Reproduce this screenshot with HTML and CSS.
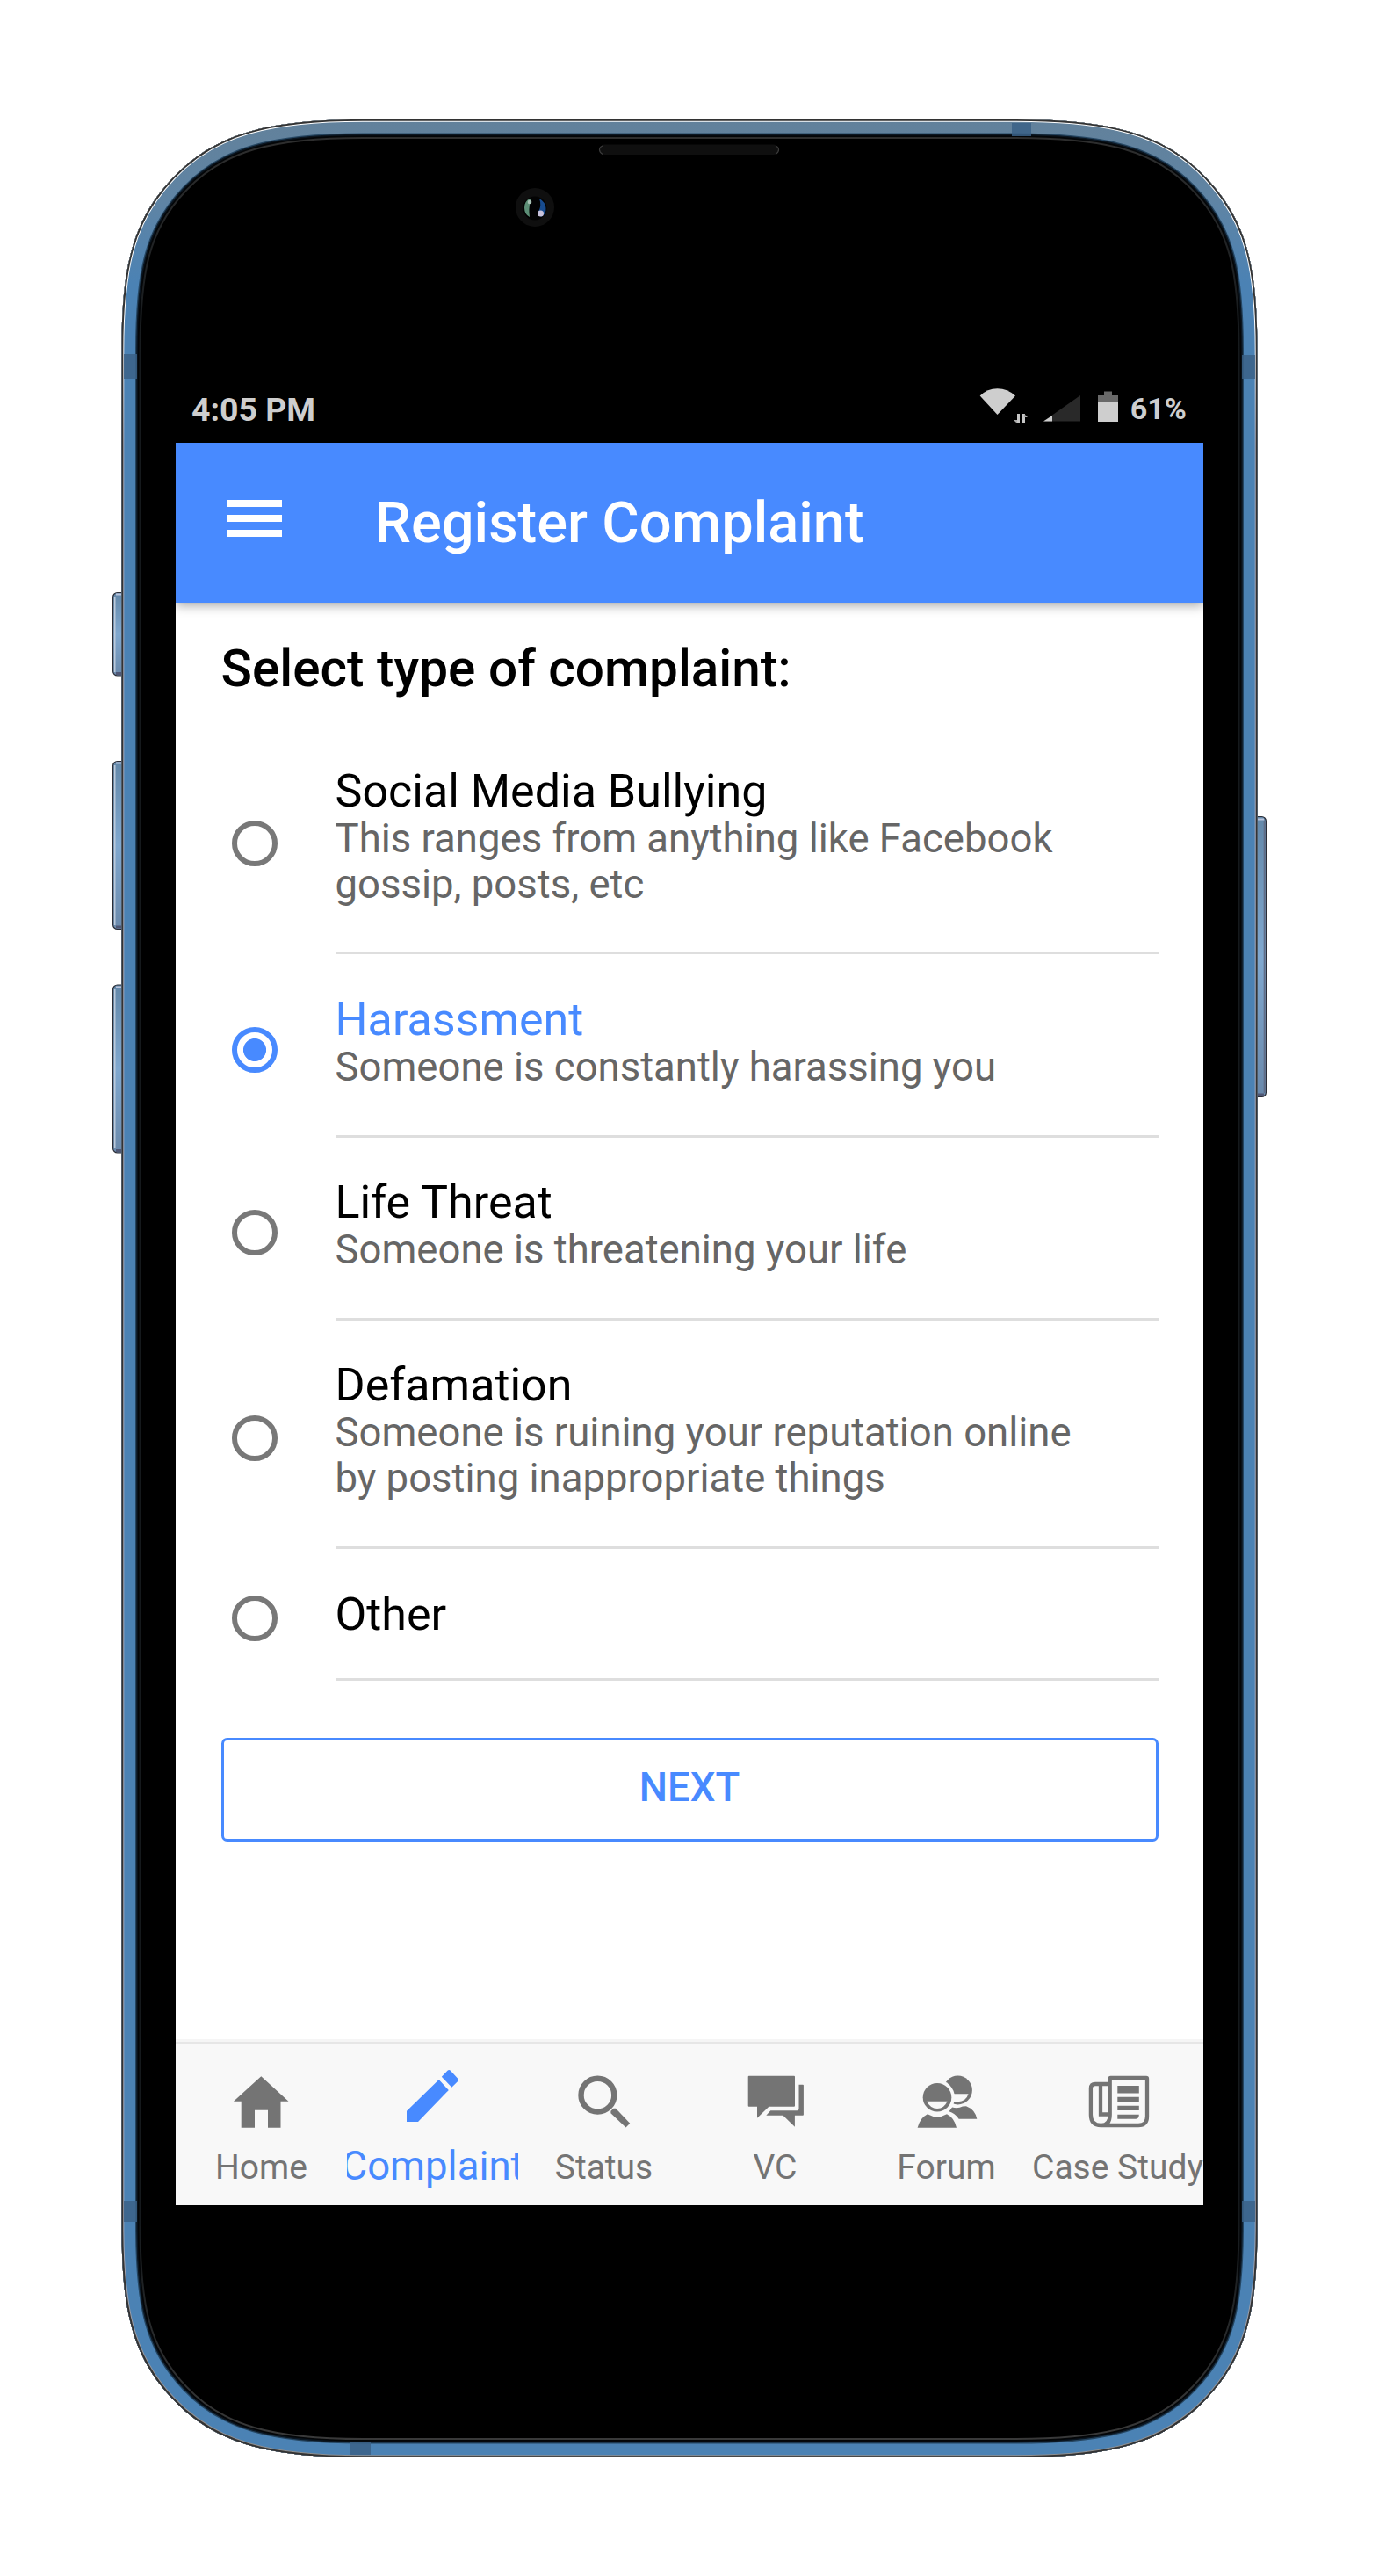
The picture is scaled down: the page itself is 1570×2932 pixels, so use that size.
FILE: index.html
```html
<!DOCTYPE html>
<html lang="en">
<head>
<meta charset="utf-8">
<title>Register Complaint</title>
<link rel="stylesheet" href="styles.css">
</head>
<body>
<div class="device">
  <svg class="device-art" viewBox="0 0 1570 2932" aria-hidden="true">
    <defs>
      <path id="shell" d="M138.5 400C138.5 310 148 253 197 202C245 151 308 136 413 136H1157C1262 136 1325 151 1373 202C1422 253 1431.5 310 1431.5 400V2533C1431.5 2623 1422 2680 1373 2731C1325 2782 1262 2797 1157 2797H413C308 2797 245 2782 197 2731C148 2680 138.5 2623 138.5 2533Z"/>
      <clipPath id="shell-clip"><use href="#shell"/></clipPath>
      <linearGradient id="metal" gradientUnits="userSpaceOnUse" x1="0" y1="136" x2="0" y2="2797">
        <stop offset="0" stop-color="#62819b"/><stop offset=".035" stop-color="#5f84a4"/><stop offset=".07" stop-color="#4b82b4"/><stop offset="1" stop-color="#4b82b4"/>
      </linearGradient>
      <linearGradient id="rim" gradientUnits="userSpaceOnUse" x1="0" y1="136" x2="0" y2="2797">
        <stop offset="0" stop-color="#303030"/><stop offset=".1" stop-color="#15191c"/><stop offset=".9" stop-color="#15191c"/><stop offset="1" stop-color="#3c3c3c"/>
      </linearGradient>
      <linearGradient id="highlight" gradientUnits="userSpaceOnUse" x1="0" y1="136" x2="0" y2="2797">
        <stop offset="0" stop-color="#fff"/><stop offset=".09" stop-color="#fff"/><stop offset=".14" stop-color="#a9adc0"/><stop offset=".88" stop-color="#a9adc0"/><stop offset="1" stop-color="#8d8d8d"/>
      </linearGradient>
      <linearGradient id="key" x1="0" y1="0" x2="0" y2="1">
        <stop offset="0" stop-color="#6388a9"/><stop offset=".5" stop-color="#80a8cf"/><stop offset="1" stop-color="#6a89ab"/>
      </linearGradient>
    </defs>
    <g fill="url(#key)" stroke="#2b2d36" stroke-width="1.2">
      <rect x="128.6" y="674.5" width="20" height="94.5" rx="5"/>
      <rect x="128.6" y="866.5" width="20" height="191" rx="5"/>
      <rect x="128.6" y="1121" width="20" height="191" rx="5"/>
      <rect x="1421" y="929.5" width="20.4" height="319" rx="5"/>
    </g>
    <path d="M130.7 679V765M130.7 871V1053M130.7 1126V1307" stroke="#bccadb" stroke-width="1.6"/>
    <path d="M1439.5 934V1244" stroke="#626d87" stroke-width="1.6"/>
    <path d="M132 676.5h7M132 868.5h7M132 1123.5h7M1432 932.5h7" stroke="#b9c4dc" stroke-width="2"/>
    <path d="M132 766.5h7M132 1055h7M132 1309.5h7M1432 1246h7" stroke="#4f5775" stroke-width="3"/>
    <g clip-path="url(#shell-clip)" fill="none">
      <use href="#shell" fill="#000"/>
      <use href="#shell" stroke="url(#rim)" stroke-width="44"/>
      <use href="#shell" stroke="#040608" stroke-width="40"/>
      <use href="#shell" stroke="#0b1621" stroke-width="36.5"/>
      <use href="#shell" stroke="#254662" stroke-width="33.5"/>
      <use href="#shell" stroke="url(#metal)" stroke-width="31"/>
      <use href="#shell" stroke="url(#highlight)" stroke-width="5.6"/>
      <use href="#shell" stroke="#333" stroke-width="3.6"/>
    </g>
    <g fill="#3b6287" fill-opacity=".85">
      <rect x="141" y="403" width="15" height="28"/><rect x="1414" y="404" width="15" height="27"/>
      <rect x="141" y="2505" width="15" height="24"/><rect x="1414" y="2505" width="15" height="24"/>
      <rect x="1152" y="140" width="22" height="15"/><rect x="398" y="2779" width="24" height="15"/>
    </g>
    <rect x="682.5" y="164.5" width="204" height="11.5" rx="5.7" fill="#0f0f0f"/>
    <path d="M686 166q-3.5 1.5-3.5 4.5t3.5 5M883 166q3.5 1.5 3.5 4.5t-3.5 5" fill="none" stroke="#3c3c3c" stroke-width="1.2"/>
    <circle cx="609" cy="236" r="22" fill="#0f0f0f"/>
    <circle cx="609" cy="237" r="13.5" fill="#030303"/>
    <path d="M603 226q-6 3-6 10.500t6 10.500q-1.500-9 1-20z" fill="#5c8e76"/>
    <path d="M614 226q7 4 7.500 11t-5.500 10l-3-6q4-7 1-15z" fill="#174b8e"/>
    <circle cx="603" cy="230" r="2.3" fill="#a9c2b5"/><circle cx="615.5" cy="243" r="3.5" fill="#c9c3dc"/>
  </svg>

  <main class="screen">
    <div class="status-bar">
      <span class="clock">4:05 PM</span>
      <svg class="status-icons" viewBox="0 0 160 46" aria-hidden="true">
        <path d="M.7 12.5Q9 4.300 20.500 4.300T41 12.500L20.500 34Z" fill="#cecece"/>
        <path d="M44.500 33v11M50.500 33v11" stroke="#c6c6c6" stroke-width="3"/><path d="M39 40h4v4zM55 37h-4v-4z" fill="#aaa"/>
        <path d="M73 41.500L115 12V41.500Z" fill="#292929"/><path d="M73 41.500L83 35V41.500Z" fill="#cecece"/>
        <path d="M135 20V12h7V7.500h9V12h7v8z" fill="#696969"/><path d="M135 20h23v22h-23z" fill="#cecece"/>
      </svg>
      <span class="battery">61%</span>
    </div>

    <header class="app-bar">
      <button class="menu" aria-label="Menu"><i></i><i></i><i></i></button>
      <h1>Register Complaint</h1>
    </header>

    <section class="content">
      <h2>Select type of complaint:</h2>
      <div class="option"><span class="radio"></span><div class="option-text"><h3>Social Media Bullying</h3><p>This ranges from anything like Facebook<br>gossip, posts, etc</p></div></div>
      <div class="option selected"><span class="radio"></span><div class="option-text"><h3>Harassment</h3><p>Someone is constantly harassing you</p></div></div>
      <div class="option"><span class="radio"></span><div class="option-text"><h3>Life Threat</h3><p>Someone is threatening your life</p></div></div>
      <div class="option"><span class="radio"></span><div class="option-text"><h3>Defamation</h3><p>Someone is ruining your reputation online<br>by posting inappropriate things</p></div></div>
      <div class="option single"><span class="radio"></span><div class="option-text"><h3>Other</h3></div></div>
      <button class="next">NEXT</button>
    </section>

    <nav class="tabs">
      <a class="tab"><svg viewBox="0 0 78 78"><path d="M38.300 10.200L69.500 38.700H60.500V68.700H46V48.700H31V68.700H15.700V38.700H6.900Z"/></svg><span>Home</span></a>
      <a class="tab active"><svg viewBox="0 0 78 78"><path d="M9 49.700V62H22L56.800 26L45.700 14ZM48.800 10.700L55.500 3.800Q57.200 2.300 58.900 3.800L67.200 12.800Q68.600 14.500 67.200 16L60.300 22.700Z"/></svg><span>Complaint</span></a>
      <a class="tab"><svg viewBox="0 0 78 78"><circle cx="31.400" cy="31.700" r="18.900" fill="none" stroke="currentColor" stroke-width="6.400"/><path d="M46.400 49.800L49.500 46.800H52L68.200 63.700L63.500 68.500L46.400 52.300Z"/></svg><span>Status</span></a>
      <a class="tab"><svg viewBox="0 0 78 78"><path d="M8.700 9.700H60q1 0 1 1V43.700q0 1-1 1H31.400L18 57.700V44.700H8.700q-1 0-1-1V10.700q0-1 1-1ZM65.500 19.700H70q.9 0 .9.9V53.800q0 .9-.9.9H60.900V67.700L47.500 54.700H28.300L33.300 49.300H63.500q2 0 2-2Z"/></svg><span>VC</span></a>
      <a class="tab"><svg viewBox="0 0 78 78"><circle cx="51.500" cy="26" r="16.400"/><path class="paper" d="M47 30.300H63.500Q61 38.800 51.500 39.200H46Z"/><path d="M45 45.500Q51.500 47.500 57 44.600L61 44.300Q71 48 73.300 58.700H52.600Q48 52 41.500 50.300Z"/><circle class="paper" cx="28" cy="34.300" r="20"/><circle cx="28" cy="34.300" r="16.300"/><path class="paper" d="M16.300 38.800H39.500Q36 47 28 47T16.300 38.800Z"/><path d="M17 53.300Q28 59.500 39 53.300Q47.500 57.500 50 68.700H5.600Q8.500 57.500 17 53.300Z"/></svg><span>Forum</span></a>
      <a class="tab"><svg viewBox="0 0 78 78"><g fill="none" stroke="currentColor" stroke-width="4.300"><path d="M29.700 19H13Q7.900 19 7.900 24V54Q7.900 66 19.500 66H62Q72 66 72 56V13Q72 11.900 71 11.900H30.500Q29.700 11.900 29.700 13V54Q29.700 66 19.500 66"/><path d="M19 19V53.500H29.700"/></g><path d="M38.300 21H62.800V29.400H38.300ZM38.300 33.700H62.800V39.300H38.300ZM38.300 43.700H62.800V49H38.300ZM38.300 53.700H62.800Q62.800 58.700 58.800 58.700H38.300Z"/></svg><span>Case Study</span></a>
    </nav>
  </main>
</div>
</body>
</html>
```
FILE: styles.css
```css
* { box-sizing: border-box; }
body {
  margin: 0;
  background: #fff;
  font-family: Roboto, "Liberation Sans", sans-serif;
}
h1, h2, h3, p { margin: 0; }
button { font: inherit; border: 0; padding: 0; background: none; }

.device {
  position: relative;
  width: 1570px;
  height: 2932px;
  padding: 437px 200px 0;
}
.device-art { position: absolute; inset: 0; width: 1570px; height: 2932px; }
.screen {
  position: relative;
  display: flex;
  flex-direction: column;
  width: 1170px;
  height: 2072.5px;
}

.status-bar {
  display: flex;
  align-items: flex-start;
  height: 66.5px;
  padding: 1px 19px 0 18px;
  color: #cecece;
  font-weight: 700;
}
.clock { font-size: 37.4px; line-height: 57px; margin-right: auto; white-space: nowrap; }
.status-icons { width: 160px; height: 46px; flex: none; }
.battery { width: 76px; text-align: right; font-size: 34px; line-height: 55px; }

.app-bar {
  display: flex;
  align-items: center;
  flex: none;
  height: 182.2px;
  padding-left: 59px;
  background: #488aff;
  color: #fff;
  box-shadow: 0 3px 12px rgba(0, 0, 0, .36);
  clip-path: inset(0 0 -18px 0);
  z-index: 1;
}
.menu { display: flex; flex-direction: column; gap: 9.3px; width: 62px; margin: 0 106px 9px 0; }
.menu i { height: 8px; background: #fff; }
h1 { font-size: 65px; font-weight: 500; line-height: 76px; white-space: nowrap; }

.content { flex: 1; padding: 11.6px 51.5px 0; background: #fff; }
h2 { font-size: 58.5px; font-weight: 500; line-height: 129px; color: #000; white-space: nowrap; }
.option { display: flex; align-items: center; padding-left: 12.5px; }
.radio {
  flex: none;
  width: 52px;
  height: 52px;
  margin: 8px 65.5px 0 0;
  border: 6.5px solid #787878;
  border-radius: 50%;
}
.option-text { flex: 1; padding: 45.5px 0 50.7px; border-bottom: 3px solid #dedede; white-space: nowrap; }
.single .option-text { padding-bottom: 44.5px; }
h3 { font-size: 52px; font-weight: 400; line-height: 57px; color: #000; }
p { font-size: 45.5px; line-height: 52px; color: #666; }
.selected h3 { color: #488aff; }
.selected .radio {
  border-color: #488aff;
  background: radial-gradient(circle, #488aff 12.6px, transparent 13.4px);
}
.next {
  display: block;
  width: 100%;
  height: 117.5px;
  margin-top: 65px;
  padding-bottom: 5px;
  border: 3px solid #488aff;
  border-radius: 6.5px;
  color: #488aff;
  font-size: 45.5px;
  font-weight: 500;
}

.tabs {
  display: flex;
  flex: none;
  height: 185.5px;
  padding-top: 26px;
  border-top: 3px solid #e6e6e6;
  background: #f8f8f8;
  box-shadow: 0 -3px 0 #f5f5f5;
}
.tab {
  display: flex;
  flex-direction: column;
  align-items: center;
  width: 195px;
  overflow: hidden;
  color: #747474;
}
.tab svg { width: 78px; height: 78px; flex: none; fill: currentColor; }
.tab .paper { fill: #f8f8f8; }
.tab span { margin-top: 13px; font-size: 39px; line-height: 46px; white-space: nowrap; }
.tab.active { color: #488aff; }
.tab.active span { margin-top: 12px; font-size: 45.5px; }
```
